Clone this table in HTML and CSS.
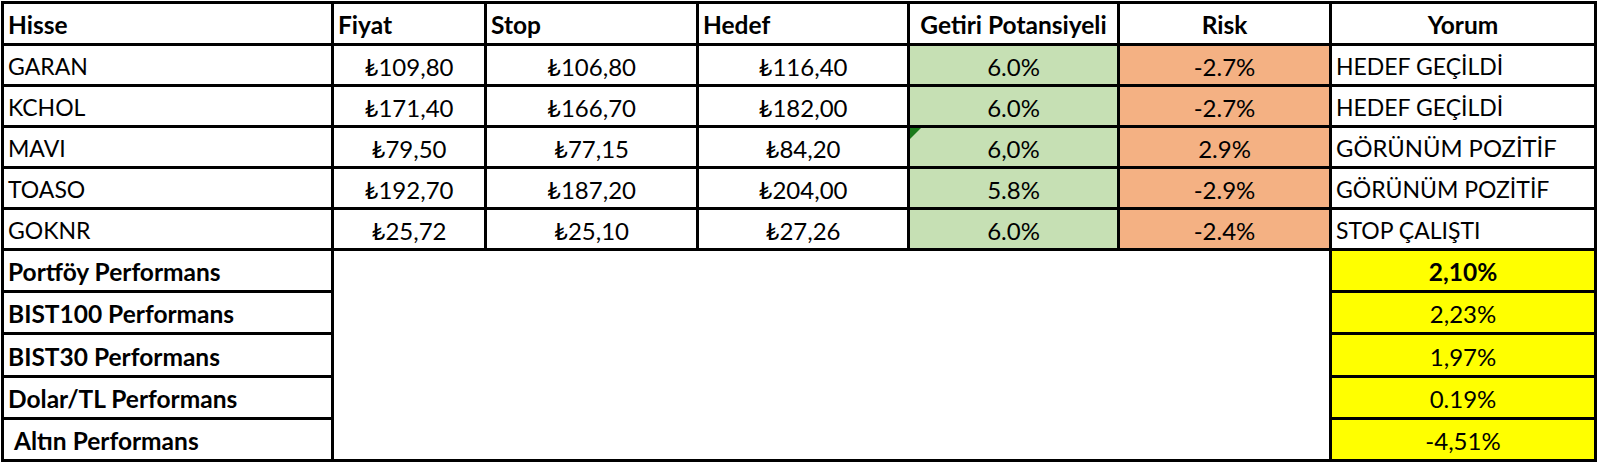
FILE: index.html
```html
<!DOCTYPE html>
<html lang="tr">
<head>
<meta charset="utf-8">
<title>Portföy</title>
<link rel="stylesheet" href="styles.css">
</head>
<body>
<div class="sheet">
  <div class="c h">Hisse</div>
  <div class="c h">Fiyat</div>
  <div class="c h">Stop</div>
  <div class="c h">Hedef</div>
  <div class="c h ctr">Getiri Potansiyeli</div>
  <div class="c h ctr">Risk</div>
  <div class="c h ctr">Yorum</div>

  <div class="c">GARAN</div>
  <div class="c ctr num">₺109,80</div>
  <div class="c ctr num">₺106,80</div>
  <div class="c ctr num">₺116,40</div>
  <div class="c ctr num green">6.0%</div>
  <div class="c ctr num orange">-2.7%</div>
  <div class="c">HEDEF GEÇİLDİ</div>

  <div class="c">KCHOL</div>
  <div class="c ctr num">₺171,40</div>
  <div class="c ctr num">₺166,70</div>
  <div class="c ctr num">₺182,00</div>
  <div class="c ctr num green">6.0%</div>
  <div class="c ctr num orange">-2.7%</div>
  <div class="c">HEDEF GEÇİLDİ</div>

  <div class="c">MAVI</div>
  <div class="c ctr num">₺79,50</div>
  <div class="c ctr num">₺77,15</div>
  <div class="c ctr num">₺84,20</div>
  <div class="c ctr num green flagged">6,0%</div>
  <div class="c ctr num orange">2.9%</div>
  <div class="c big">GÖRÜNÜM POZİTİF</div>

  <div class="c">TOASO</div>
  <div class="c ctr num">₺192,70</div>
  <div class="c ctr num">₺187,20</div>
  <div class="c ctr num">₺204,00</div>
  <div class="c ctr num green">5.8%</div>
  <div class="c ctr num orange">-2.9%</div>
  <div class="c">GÖRÜNÜM POZİTİF</div>

  <div class="c">GOKNR</div>
  <div class="c ctr num">₺25,72</div>
  <div class="c ctr num">₺25,10</div>
  <div class="c ctr num">₺27,26</div>
  <div class="c ctr num green">6.0%</div>
  <div class="c ctr num orange">-2.4%</div>
  <div class="c">STOP ÇALIŞTI</div>

  <div class="c h">Portföy Performans</div>
  <div class="c blank"></div>
  <div class="c ctr num yellow h">2,10%</div>

  <div class="c h">BIST100 Performans</div>
  <div class="c ctr num yellow">2,23%</div>

  <div class="c h">BIST30 Performans</div>
  <div class="c ctr num yellow">1,97%</div>

  <div class="c h">Dolar/TL Performans</div>
  <div class="c ctr num yellow">0.19%</div>

  <div class="c h indent">Altın Performans</div>
  <div class="c ctr num yellow">-4,51%</div>
</div>
</body>
</html>
```
FILE: styles.css
```css
html, body {
  margin: 0;
  padding: 0;
  background: #ffffff;
}

body {
  font-family: Lato, "DejaVu Sans", sans-serif;
  color: #000;
}

.sheet {
  margin: 1px 0 0 1px;
  width: 1596px;
  box-sizing: border-box;
  display: grid;
  grid-template-columns: 327px 150px 209px 208px 207px 209px 262px;
  grid-template-rows: 39px 38px 38px 38px 38px 38px 39px 39px 40px 39px 39px;
  gap: 3px;
  padding: 3px;
  background: #000;
}

.c {
  background: #fff;
  display: flex;
  align-items: center;
  padding: 2px 4px 0 4px;
  font-size: 23px;
  white-space: nowrap;
  overflow: hidden;
  position: relative;
}

.num {
  font-size: 24px;
}

.h {
  font-weight: 700;
  font-size: 24.5px;
}

.ctr {
  justify-content: center;
}

.green {
  background: #c6e0b4;
}

.orange {
  background: #f4b183;
}

.yellow {
  background: #ffff00;
}

.big {
  font-size: 23.8px;
}

.indent {
  padding-left: 10px;
}

.blank {
  grid-column: 2 / 7;
  grid-row: 7 / 12;
}

.flagged::before {
  content: "";
  position: absolute;
  left: 0;
  top: 0;
  width: 0;
  height: 0;
  border-top: 11px solid #1a7a1a;
  border-right: 11px solid transparent;
}
```
